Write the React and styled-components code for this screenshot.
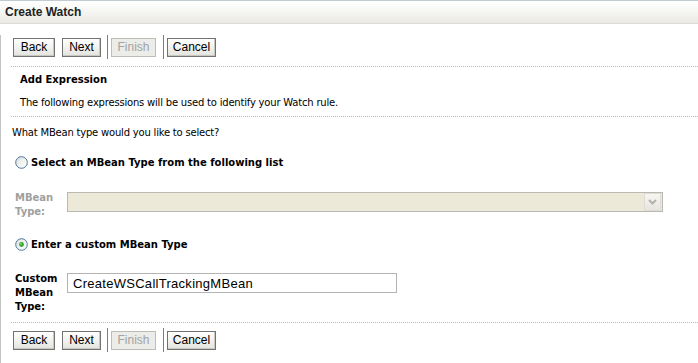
import React from "react";
import styled, { createGlobalStyle } from "styled-components";

const Global = createGlobalStyle`
  html, body { margin: 0; padding: 0; background: #fff; }
  body { font-family: "DejaVu Sans", Verdana, sans-serif; font-size: 10px; color: #000; }
`;

const Page = styled.div`
  width: 698px;
  height: 363px;
  overflow: hidden;
  background: #fff;
`;

const TitleBar = styled.div`
  height: 22px;
  border-top: 1px solid #c3cad1;
  border-bottom: 1px solid #dcdcd5;
  background: linear-gradient(#ffffff 0%, #f7f7f4 40%, #eae9e3 100%);
  display: flex;
  align-items: center;
  padding-left: 5px;
  font-family: "Liberation Sans", Arial, sans-serif;
  font-weight: bold;
  font-size: 12px;
  color: #222;
`;

const Body = styled.div`
  border-left: 1px solid #c4c4c4;
  height: 339px;
`;

const ButtonBar = styled.div`
  display: flex;
  align-items: center;
  padding-left: 11px;
  margin-top: ${(p) => p.$top}px;
  height: 24px;
`;

const Button = styled.button`
  box-sizing: border-box;
  width: ${(p) => p.$w}px;
  height: 19px;
  padding: 0;
  margin-left: ${(p) => p.$ml ?? 0}px;
  font-family: "Liberation Sans", Arial, sans-serif;
  font-size: 12px;
  line-height: 17px;
  text-align: center;
  color: ${(p) => (p.disabled ? "#a3a3a3" : "#000")};
  background: ${(p) =>
    p.disabled
      ? "#ecece9"
      : "linear-gradient(#ffffff 0%, #f3f3f1 45%, #e2e2de 100%)"};
  border: 1px solid ${(p) => (p.disabled ? "#bdbdb7" : "#727272")};
  border-radius: 0;
  box-shadow: ${(p) => (p.disabled ? "none" : "inset -1px -1px 0 #c8c8c2")};
  cursor: default;
`;

const Sep = styled.span`
  width: 1px;
  height: 24px;
  background: #7d7d7d;
  margin-left: ${(p) => p.$ml}px;
`;

const Divider = styled.div`
  margin-left: 10px;
  margin-top: ${(p) => p.$top}px;
  border-top: 1px dotted #b9b9b9;
`;

const Heading = styled.div`
  padding-left: 19px;
  margin-top: ${(p) => p.$top}px;
  line-height: 14px;
  font-weight: bold;
`;

const Text = styled.div`
  padding-left: ${(p) => p.$left}px;
  margin-top: ${(p) => p.$top}px;
  line-height: 14px;
  letter-spacing: -0.2px;
`;

const RadioRow = styled.label`
  display: flex;
  align-items: center;
  height: 20px;
  padding-left: 14px;
  margin-top: ${(p) => p.$top}px;
  font-weight: bold;
  gap: 3px;
`;

const FieldRow = styled.div`
  display: flex;
  align-items: flex-start;
  padding-left: 14px;
  margin-top: ${(p) => p.$top}px;
`;

const FieldLabel = styled.div`
  width: 52px;
  line-height: 14px;
  font-weight: bold;
  color: ${(p) => (p.$disabled ? "#a0a0a0" : "#000")};
`;

const SelectBox = styled.div`
  margin-top: 1px;
  width: 593px;
  height: 18px;
  border: 1px solid #b9b9b1;
  background: #ece9d8;
  display: flex;
  justify-content: flex-end;
  align-items: center;
  padding-right: 1px;
`;

const DropButton = styled.div`
  width: 15px;
  height: 16px;
  border: 1px solid #dedcd4;
  background: linear-gradient(#f6f6f3, #e6e5e0);
  display: flex;
  align-items: center;
  justify-content: center;
`;

const TextInput = styled.input`
  margin: 1px 0 0 0;
  width: 330px;
  height: 20px;
  box-sizing: border-box;
  border: 1px solid #b4b4b4;
  padding: 0 0 0 5px;
  font-family: "Liberation Sans", Arial, sans-serif;
  font-size: 13px;
  letter-spacing: 0.28px;
  color: #000;
  outline: none;
  background: #fff;
`;

const Radio = ({ checked }) => (
  <svg width="13" height="13" viewBox="0 0 13 13">
    <defs>
      <linearGradient id={checked ? "rg1" : "rg0"} x1="0" y1="0" x2="1" y2="1">
        <stop offset="0" stopColor="#dcdcd6" />
        <stop offset="0.5" stopColor="#f2f2ee" />
        <stop offset="1" stopColor="#ffffff" />
      </linearGradient>
    </defs>
    <circle cx="6.5" cy="6.5" r="5.8" fill={`url(#${checked ? "rg1" : "rg0"})`} stroke="#4a76a0" strokeWidth="1" />
    {checked && <circle cx="6.5" cy="6.5" r="2.4" fill="#2ea52e" />}
    {checked && <circle cx="6" cy="6" r="1" fill="#7fd77f" />}
  </svg>
);

const Chevron = () => (
  <svg width="9" height="6" viewBox="0 0 9 6">
    <path d="M1 1 L4.5 4.5 L8 1" fill="none" stroke="#b3b3ad" strokeWidth="2" />
  </svg>
);

const Buttons = ({ top }) => (
  <ButtonBar $top={top}>
    <Button $ml={1} $w={42}>Back</Button>
    <Button $ml={7} $w={39}>Next</Button>
    <Sep $ml={6} />
    <Button $ml={3} $w={45} disabled>Finish</Button>
    <Sep $ml={7} />
    <Button $ml={3} $w={49}>Cancel</Button>
  </ButtonBar>
);

export default function App() {
  return (
    <Page>
      <Global />
      <TitleBar>Create Watch</TitleBar>
      <Body>
        <Buttons top={11} />
        <Divider $top={7} />
        <Heading $top={6}>Add Expression</Heading>
        <Text $left={19} $top={9}>
          The following expressions will be used to identify your Watch rule.
        </Text>
        <Divider $top={6} />
        <Text $left={11} $top={9}>What MBean type would you like to select?</Text>
        <RadioRow $top={12}>
          <Radio />
          Select an MBean Type from the following list
        </RadioRow>
        <FieldRow $top={19}>
          <FieldLabel $disabled>
            MBean
            <br />
            Type:
          </FieldLabel>
          <SelectBox>
            <DropButton>
              <Chevron />
            </DropButton>
          </SelectBox>
        </FieldRow>
        <RadioRow $top={15}>
          <Radio checked />
          Enter a custom MBean Type
        </RadioRow>
        <FieldRow $top={18}>
          <FieldLabel>
            Custom
            <br />
            MBean
            <br />
            Type:
          </FieldLabel>
          <TextInput defaultValue="CreateWSCallTrackingMBean" />
        </FieldRow>
        <Divider $top={8} />
        <Buttons top={5} />
      </Body>
    </Page>
  );
}
